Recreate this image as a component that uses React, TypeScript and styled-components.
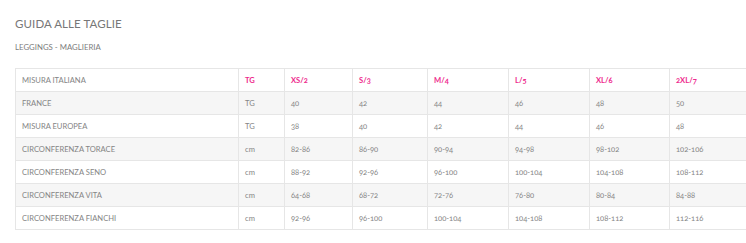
import styled, { createGlobalStyle } from "styled-components";

//TYPESCRIPT
type Row = {
  label: string;
  unit: string;
  values: string[];
};

//DATA
const sizes = ["XS/2", "S/3", "M/4", "L/5", "XL/6", "2XL/7"];
const colWidths = [223, 46, 68, 75, 81, 81, 80, 80];

const rows: Row[] = [
  { label: "FRANCE", unit: "TG", values: ["40", "42", "44", "46", "48", "50"] },
  { label: "MISURA EUROPEA", unit: "TG", values: ["38", "40", "42", "44", "46", "48"] },
  {
    label: "CIRCONFERENZA TORACE",
    unit: "cm",
    values: ["82-86", "86-90", "90-94", "94-98", "98-102", "102-106"],
  },
  {
    label: "CIRCONFERENZA SENO",
    unit: "cm",
    values: ["88-92", "92-96", "96-100", "100-104", "104-108", "108-112"],
  },
  {
    label: "CIRCONFERENZA VITA",
    unit: "cm",
    values: ["64-68", "68-72", "72-76", "76-80", "80-84", "84-88"],
  },
  {
    label: "CIRCONFERENZA FIANCHI",
    unit: "cm",
    values: ["92-96", "96-100", "100-104", "104-108", "108-112", "112-116"],
  },
];

//REACT
const App = () => {
  return (
    <>
      <GlobalStyle />
      <Page>
        <Title>GUIDA ALLE TAGLIE</Title>
        <Subtitle>LEGGINGS - MAGLIERIA</Subtitle>

        <SizeTable>
          <colgroup>
            {colWidths.map((w, i) => (
              <col key={i} style={{ width: w }} />
            ))}
          </colgroup>
          <thead>
            <tr>
              <Cell>MISURA ITALIANA</Cell>
              <Cell $accent>TG</Cell>
              {sizes.map((s) => (
                <Cell key={s} $accent>
                  {s}
                </Cell>
              ))}
            </tr>
          </thead>
          <tbody>
            {rows.map((r) => (
              <BodyRow key={r.label}>
                <Cell>{r.label}</Cell>
                <Cell>{r.unit}</Cell>
                {r.values.map((v, i) => (
                  <Cell key={i}>{v}</Cell>
                ))}
              </BodyRow>
            ))}
          </tbody>
        </SizeTable>
      </Page>
    </>
  );
};

//STYLED-COMPONENTS
const GlobalStyle = createGlobalStyle`
  html, body {
    margin: 0;
    padding: 0;
    background: #fff;
    overflow: hidden;
    font-family: Lato, "Open Sans", sans-serif;
    color: #777;
  }
`;

const Page = styled.div`
  padding: 16px 0 0 15px;
  width: 760px;
`;

const Title = styled.h1`
  margin: 0;
  font-size: 11.5px;
  line-height: 16px;
  font-weight: 400;
  color: #777;
  letter-spacing: 0.1px;
`;

const Subtitle = styled.h2`
  margin: 9px 0 0;
  font-size: 7.8px;
  line-height: 12px;
  font-weight: 400;
  color: #7d7d7d;
`;

const SizeTable = styled.table`
  margin-top: 15px;
  border-collapse: collapse;
  table-layout: fixed;
  width: 734px;
  border: 1px solid #e6e6e6;
`;

const BodyRow = styled.tr`
  &:nth-child(odd) {
    background: #f6f6f6;
  }
`;

const Cell = styled.td<{ $accent?: boolean }>`
  height: 22px;
  padding: 0 6px;
  border: 1px solid #e6e6e6;
  font-size: 7.6px;
  font-weight: ${(p) => (p.$accent ? 700 : 400)};
  color: ${(p) => (p.$accent ? "#ee2a8d" : "#858585")};
  font-variant-numeric: oldstyle-nums;
  white-space: nowrap;
  vertical-align: middle;
  text-align: left;
`;

export default App;
